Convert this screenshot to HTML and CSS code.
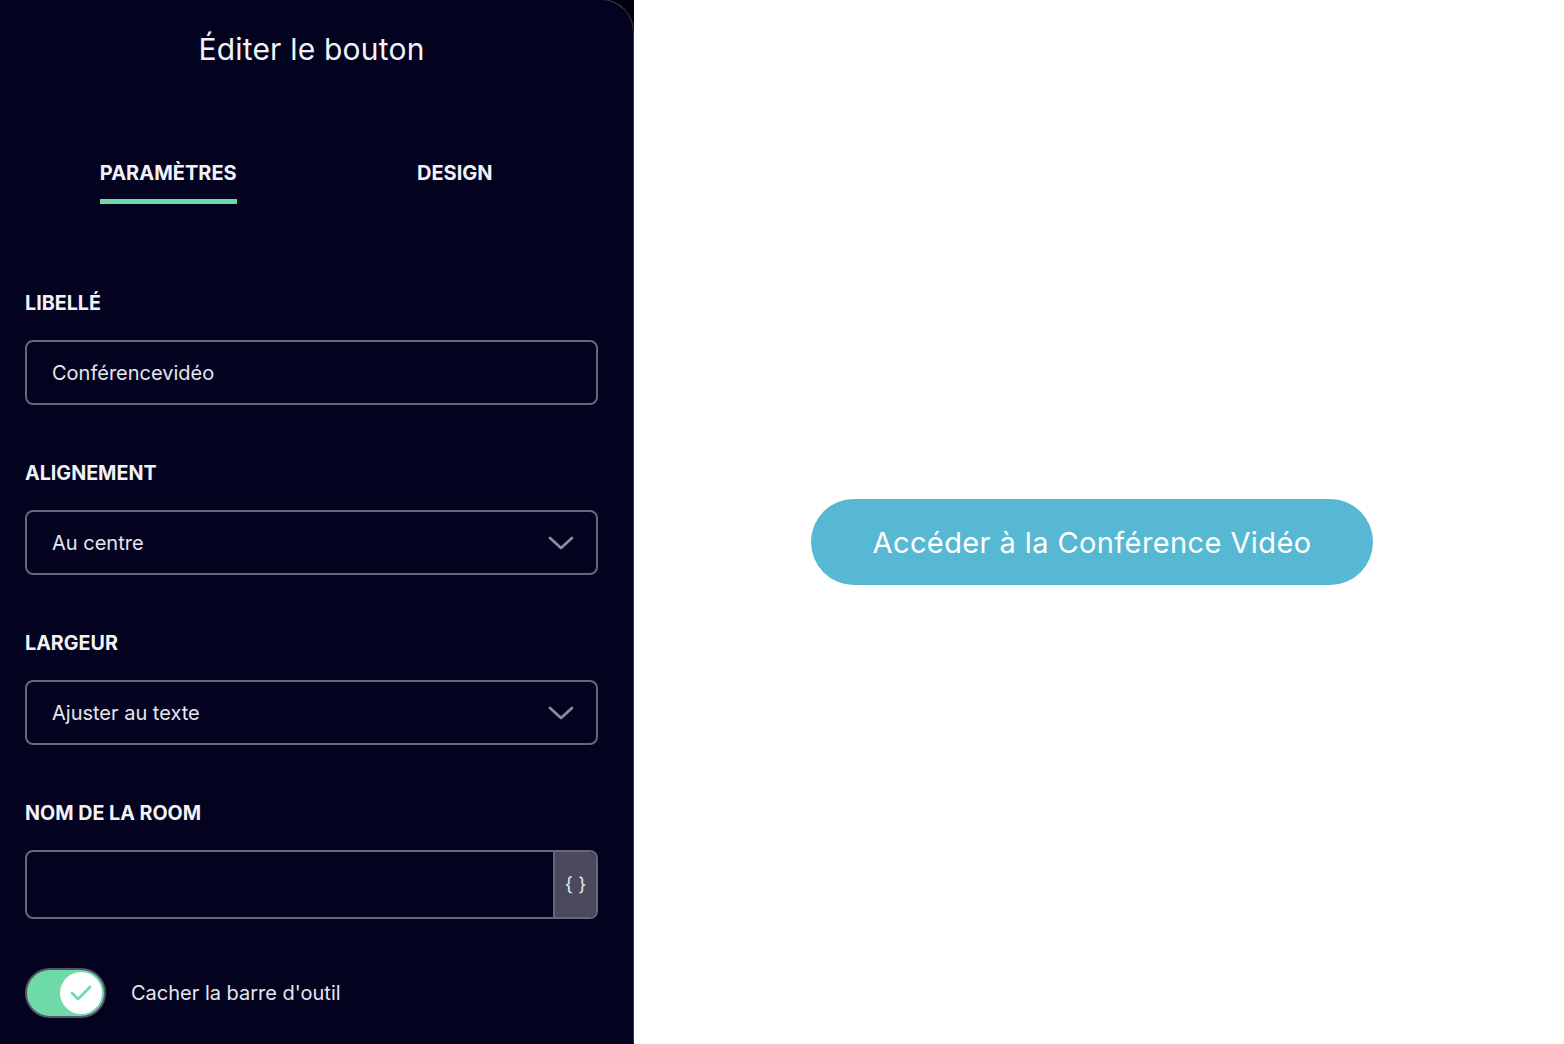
FILE: index.html
```html
<!DOCTYPE html>
<html lang="fr">
<head>
  <meta charset="UTF-8" />
  <title>Éditer le bouton</title>
  <link rel="stylesheet" href="styles.css">
</head>
<body>
  <div class="page">
    <div class="panel-wrap">
      <aside class="panel">
        <h1>Éditer le bouton</h1>

        <div class="tabs">
          <div class="tab active"><span>PARAMÈTRES</span></div>
          <div class="tab"><span>DESIGN</span></div>
        </div>

        <div class="field">
          <label>LIBELLÉ</label>
          <div class="input">Conférencevidéo</div>
        </div>

        <div class="field">
          <label>ALIGNEMENT</label>
          <div class="input select">
            <span>Au centre</span>
            <svg width="26" height="16" viewBox="0 0 26 16"><path d="M2 3 L13 13 L24 3" fill="none" stroke="#8b8a9e" stroke-width="2.8" stroke-linecap="round" stroke-linejoin="round"/></svg>
          </div>
        </div>

        <div class="field">
          <label>LARGEUR</label>
          <div class="input select">
            <span>Ajuster au texte</span>
            <svg width="26" height="16" viewBox="0 0 26 16"><path d="M2 3 L13 13 L24 3" fill="none" stroke="#8b8a9e" stroke-width="2.8" stroke-linecap="round" stroke-linejoin="round"/></svg>
          </div>
        </div>

        <div class="field">
          <label>NOM DE LA ROOM</label>
          <div class="input room">
            <div class="room-value"></div>
            <div class="addon">{ }</div>
          </div>
        </div>

        <div class="switch-row">
          <div class="switch">
            <div class="knob">
              <svg width="24" height="20" viewBox="0 0 24 20"><path d="M3 10 L9 16 L21 4" fill="none" stroke="#6ddaa8" stroke-width="2.8" stroke-linecap="round" stroke-linejoin="round"/></svg>
            </div>
          </div>
          <span>Cacher la barre d'outil</span>
        </div>
      </aside>
    </div>

    <main class="preview">
      <button class="cta">Accéder à la Conférence Vidéo</button>
    </main>
  </div>
</body>
</html>
```

FILE: styles.css
```css
body {
  margin: 0;
  font-family: Inter, "Noto Sans", sans-serif;
  background: #ffffff;
}

.page {
  display: flex;
  height: 1044px;
  overflow: hidden;
}

.panel-wrap {
  width: 634px;
  flex-shrink: 0;
  background: #02010c;
}

.panel {
  height: 100%;
  box-sizing: border-box;
  padding: 0 35px 0 25px;
  background: #03021f;
  color: #f2f2f6;
  border-top-right-radius: 33px;
  border-right: 1px solid #3b3a52;
  border-top: 1px solid #3b3a52;
  margin-top: -1px;
}

h1 {
  margin: 31px 0 0;
  font-size: 30px;
  font-weight: 400;
  line-height: 36px;
  text-align: center;
  letter-spacing: 0.2px;
}

.tabs {
  display: flex;
  margin-top: 94px;
  margin-bottom: 87px;
}

.tab {
  flex: 1;
  text-align: center;
  font-size: 20px;
  font-weight: 700;
  line-height: 24px;
}

.tab span {
  display: inline-block;
  padding-bottom: 14px;
  border-bottom: 5px solid transparent;
}

.tab.active span {
  border-bottom-color: #6ddaa8;
}

.field {
  margin-bottom: 56px;
}

.field label {
  display: block;
  font-size: 19.7px;
  font-weight: 700;
  line-height: 24px;
  margin-bottom: 25px;
}

.input {
  box-sizing: border-box;
  height: 65px;
  border: 2px solid #67667a;
  border-radius: 8px;
  padding: 0 22px 0 25px;
  display: flex;
  align-items: center;
  font-size: 20px;
  color: #e6e6ee;
}

.select {
  justify-content: space-between;
}

.room {
  height: 69px;
  padding: 0;
  overflow: hidden;
}

.room-value {
  flex: 1;
  height: 100%;
}

.addon {
  width: 41px;
  height: 100%;
  background: #4a495d;
  border-left: 2px solid #67667a;
  display: flex;
  align-items: center;
  justify-content: center;
  font-size: 19px;
  color: #e6e6ee;
}

.switch-row {
  display: flex;
  align-items: center;
  gap: 25px;
  margin-top: -7px;
  font-size: 20px;
  color: #e6e6ee;
}

.switch {
  box-sizing: border-box;
  width: 81px;
  height: 50px;
  border-radius: 25px;
  background: #6ddaa8;
  border: 2px solid #56556a;
  display: flex;
  align-items: center;
  justify-content: flex-end;
  padding-right: 2px;
}

.knob {
  width: 42px;
  height: 42px;
  border-radius: 50%;
  background: #ffffff;
  display: flex;
  align-items: center;
  justify-content: center;
}

.preview {
  flex: 1;
  display: flex;
  align-items: flex-start;
  justify-content: center;
  padding-top: 499px;
  padding-right: 14px;
}

.cta {
  height: 86px;
  padding: 0 62px;
  border: none;
  border-radius: 43px;
  background: #56b8d2;
  color: #ffffff;
  font-family: Inter, "Noto Sans", sans-serif;
  font-size: 29px;
  letter-spacing: 0.4px;
  cursor: pointer;
}
```
